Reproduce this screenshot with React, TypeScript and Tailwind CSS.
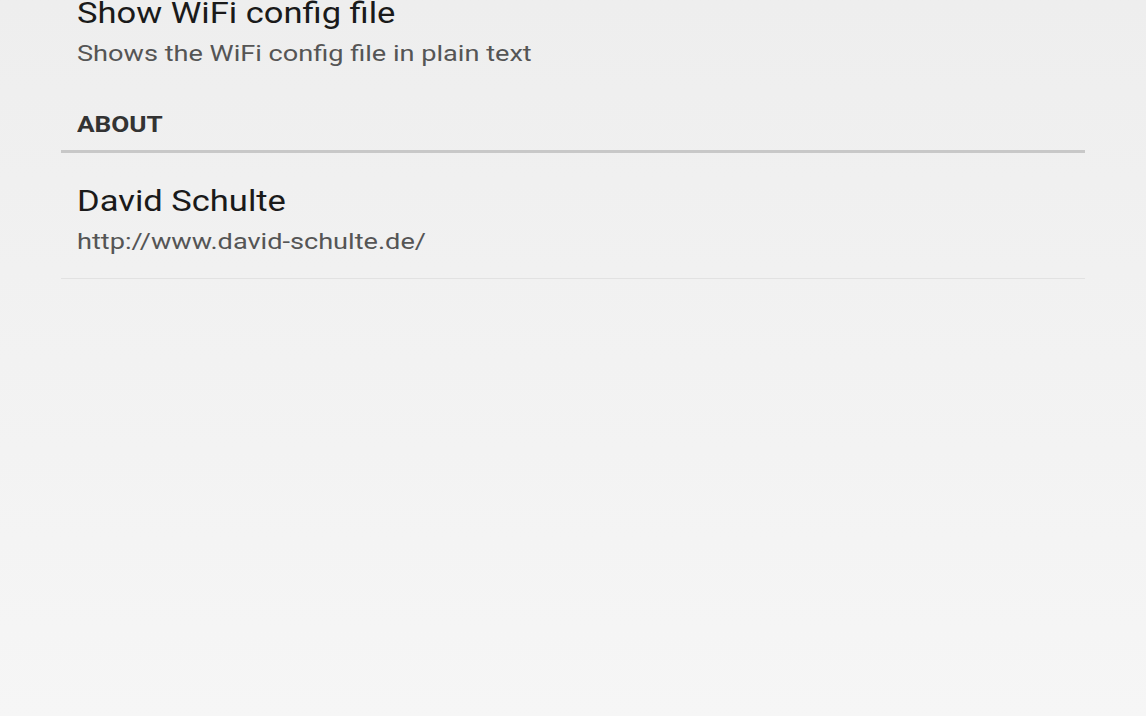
export default function App() {
  return (
    <div
      className="w-[1146px] h-[716px] overflow-hidden bg-gradient-to-b from-[#eeeeee] to-[#f6f6f6]"
      style={{ fontFamily: 'Roboto, "Noto Sans", sans-serif' }}
    >
      <div className="ml-[61px] w-[1024px] flex flex-col">
        <div className="pl-[16px] mt-[-4px] h-[34px] leading-[34px] text-[29px] text-[#1a1a1a] whitespace-nowrap">
          <span className="inline-block origin-left scale-x-[1.19]">Show WiFi config file</span>
        </div>
        <div className="pl-[16px] mt-[10px] h-[28px] leading-[28px] text-[22.8px] text-[#555555] whitespace-nowrap">
          <span className="inline-block origin-left scale-x-[1.19]">Shows the WiFi config file in plain text</span>
        </div>
        <div className="pl-[16px] mt-[43px] h-[28px] leading-[28px] text-[22px] font-bold text-[#333333] whitespace-nowrap">
          <span className="inline-block origin-left scale-x-[1.19]">ABOUT</span>
        </div>
        <div className="mt-[11px] h-[3px] bg-[#c8c8c8]" />
        <div className="pl-[16px] mt-[31px] h-[34px] leading-[34px] text-[29px] text-[#1a1a1a] whitespace-nowrap">
          <span className="inline-block origin-left scale-x-[1.19]">David Schulte</span>
        </div>
        <div className="pl-[16px] mt-[10px] h-[28px] leading-[28px] text-[22.8px] text-[#555555] whitespace-nowrap">
          <span className="inline-block origin-left scale-x-[1.19]">http://www.david-schulte.de/</span>
        </div>
        <div className="mt-[22px] h-[1px] bg-[#e2e2e2]" />
      </div>
    </div>
  );
}
